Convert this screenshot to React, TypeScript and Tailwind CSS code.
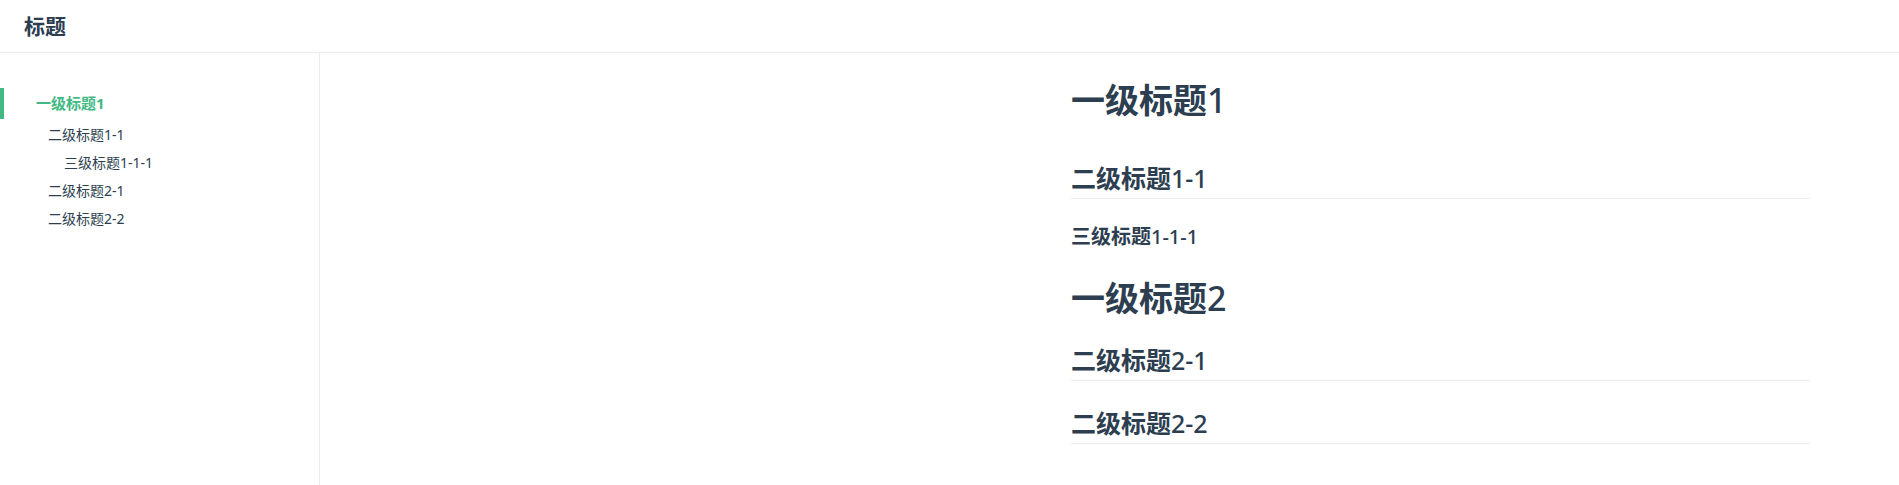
import React from "react";

const font = { fontFamily: '"Noto Sans", "Noto Sans CJK SC", sans-serif' };

function H({ cjk, num }: { cjk: string; num: string }) {
  return (
    <>
      {cjk}
      <span className="font-medium">{num}</span>
    </>
  );
}

export default function App() {
  return (
    <div className="w-[1899px] h-[485px] bg-white text-[#2c3e50] overflow-hidden" style={font}>
      <header className="h-[53px] box-border border-b border-[#eaecef] px-6 flex items-center">
        <span className="text-[21px] font-bold leading-none">标题</span>
      </header>
      <div className="flex h-[432px]">
        <aside className="w-[320px] shrink-0 box-border border-r border-[#eaecef] pt-[35px]">
          <div className="h-[31px] border-l-4 border-[#42b983] pl-[32px] flex items-center text-[15px] font-bold text-[#42b983]">
            一级标题1
          </div>
          <div className="mt-[1px] h-[28px] pl-[48px] flex items-center text-[14px]">二级标题1-1</div>
          <div className="h-[28px] pl-[64px] flex items-center text-[14px]">三级标题1-1-1</div>
          <div className="h-[28px] pl-[48px] flex items-center text-[14px]">二级标题2-1</div>
          <div className="h-[28px] pl-[48px] flex items-center text-[14px]">二级标题2-2</div>
        </aside>
        <main className="flex-1 pl-[751px]">
          <div className="w-[739px]">
            <h1 className="mt-[27px] text-[34px] leading-[40px] font-bold"><H cjk="一级标题" num="1" /></h1>
            <h2 className="mt-[43px] text-[25px] leading-[31px] font-bold pb-[4px] border-b border-[#eaecef]"><H cjk="二级标题" num="1-1" /></h2>
            <h3 className="mt-[24px] text-[20px] leading-[28px] font-bold"><H cjk="三级标题" num="1-1-1" /></h3>
            <h1 className="mt-[27px] text-[34px] leading-[40px] font-bold"><H cjk="一级标题" num="2" /></h1>
            <h2 className="mt-[27px] text-[25px] leading-[31px] font-bold pb-[4px] border-b border-[#eaecef]"><H cjk="二级标题" num="2-1" /></h2>
            <h2 className="mt-[27px] text-[25px] leading-[31px] font-bold pb-[4px] border-b border-[#eaecef]"><H cjk="二级标题" num="2-2" /></h2>
          </div>
        </main>
      </div>
    </div>
  );
}
